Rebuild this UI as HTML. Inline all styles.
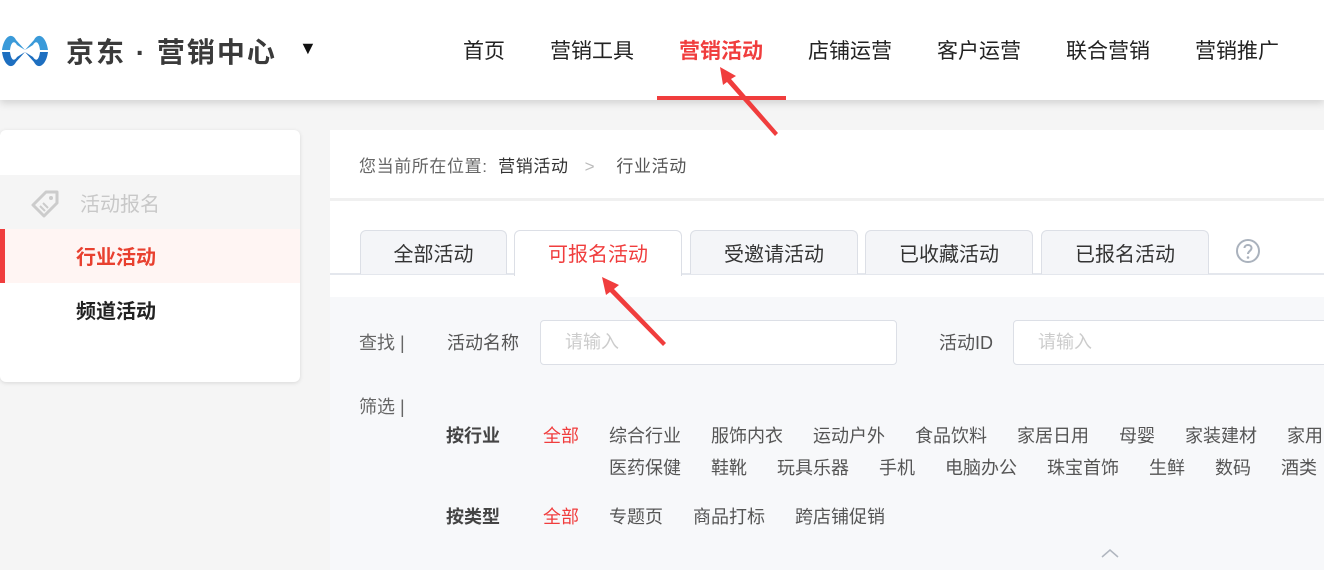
<!DOCTYPE html>
<html><head><meta charset="utf-8"><style>
*{margin:0;padding:0;box-sizing:border-box}
body{width:1324px;height:570px;overflow:hidden;background:#f5f5f5;font-family:"Liberation Sans","Noto Sans CJK SC",sans-serif;position:relative}
.a{position:absolute;white-space:nowrap}
.hdr{position:absolute;left:0;top:0;width:1324px;height:100px;background:#fff;box-shadow:0 3px 8px rgba(0,0,0,.15)}
.nav{font-size:21px;color:#222;top:35px}
.side{position:absolute;left:0;top:130px;width:300px;height:252px;background:#fff;border-radius:6px;box-shadow:0 1px 4px rgba(0,0,0,.12);overflow:hidden}
.main{position:absolute;left:330px;top:130px;width:994px;height:440px;background:#fff}
.tab{position:absolute;top:230px;height:44px;border:1px solid #dcdfe6;border-bottom:none;border-radius:6px 6px 0 0;background:#f4f5f8;font-size:20px;color:#333;text-align:center;line-height:48px}
.f{font-size:18px;color:#555}
.inp{position:absolute;height:45px;background:#fff;border:1.5px solid #dcdfe6;border-radius:4px;font-size:18px;color:#ccc;padding-left:24px;line-height:42px}
</style></head><body>
<div class="hdr"></div>
<svg class="a" style="left:0;top:28px" width="50" height="46" viewBox="0 0 50 46">
<path d="M2 22 C4 8 12 4 16 12 L25 22 L34 12 C38 4 46 8 48 22 L40 22 C39 14 36 12 33 17 L25 22 L17 17 C14 12 11 14 10 22Z" fill="#3a9ad9"/>
<path d="M2 24 C4 38 12 42 16 34 L25 24 L34 34 C38 42 46 38 48 24 L40 24 C39 32 36 34 33 29 L25 24 L17 29 C14 34 11 32 10 24Z" fill="#1e6fc0"/>
</svg>
<div class="a" style="left:66px;top:31px;font-size:28px;color:#3a3a3a;font-weight:bold;letter-spacing:2px">京东 · 营销中心</div>
<div class="a" style="left:299px;top:38px;font-size:18px;color:#111">▼</div>
<div class="a nav" style="left:463px">首页</div>
<div class="a nav" style="left:550px">营销工具</div>
<div class="a nav" style="left:679px;color:#f03d3d;font-weight:bold">营销活动</div>
<div class="a" style="left:657px;top:96px;width:129px;height:4px;background:#f03d3d"></div>
<div class="a nav" style="left:808px">店铺运营</div>
<div class="a nav" style="left:937px">客户运营</div>
<div class="a nav" style="left:1066px">联合营销</div>
<div class="a nav" style="left:1195px">营销推广</div>

<div class="side">
<div class="a" style="left:0;top:45px;width:300px;height:54px;background:#f5f5f5"></div>
<svg class="a" style="left:30px;top:58px" width="32" height="30" viewBox="0 0 32 30"><path d="M3 17 L16 4 L27 4 L27 15 L14 28Z" fill="none" stroke="#ccc" stroke-width="3" stroke-linejoin="round"/><circle cx="21" cy="10" r="2" fill="#ccc"/><path d="M10 18 L15 23 M13 15 L18 20" stroke="#ccc" stroke-width="2"/></svg>
<div class="a" style="left:80px;top:58px;font-size:20px;color:#c8c8c8">活动报名</div>
<div class="a" style="left:0;top:99px;width:300px;height:54px;background:#fff5f3"></div>
<div class="a" style="left:0;top:99px;width:5px;height:54px;background:#f03d3d"></div>
<div class="a" style="left:76px;top:111px;font-size:20px;color:#e8402f;font-weight:bold">行业活动</div>
<div class="a" style="left:76px;top:165px;font-size:20px;color:#222;font-weight:bold">频道活动</div>
</div>

<div class="main">
<div class="a" style="left:0;top:68px;width:994px;height:3px;background:#f0f0f0"></div>
<div class="a" style="left:29px;top:22px;font-size:17px;color:#666;letter-spacing:0.6px">您当前所在位置:&nbsp; <span style="color:#333">营销活动</span> &nbsp;&nbsp;<span style="color:#bbb">&gt;</span>&nbsp;&nbsp;&nbsp; <span style="color:#555">行业活动</span></div>
<div class="a" style="left:0;top:143px;width:994px;height:2px;background:#e4e7ed"></div>
<div class="a" style="left:0;top:167px;width:994px;height:273px;background:#f7f8fa"></div>
</div>
<div class="tab" style="left:360px;width:147px">全部活动</div>
<div class="tab" style="left:514px;width:168px;background:#fff;height:46px;color:#f03d3d">可报名活动</div>
<div class="tab" style="left:690px;width:168px">受邀请活动</div>
<div class="tab" style="left:865px;width:168px">已收藏活动</div>
<div class="tab" style="left:1041px;width:168px">已报名活动</div>
<svg class="a" style="left:1235px;top:238px" width="26" height="26" viewBox="0 0 26 26"><circle cx="13" cy="13" r="11" fill="none" stroke="#aab2bd" stroke-width="2"/><path d="M9.5 10 C9.5 6 16.5 6 16.5 10 C16.5 13 13 13 13 16" fill="none" stroke="#aab2bd" stroke-width="2"/><circle cx="13" cy="19.5" r="1.3" fill="#aab2bd"/></svg>

<div class="a f" style="left:359px;top:329px;color:#666">查找 |</div>
<div class="a f" style="left:447px;top:329px">活动名称</div>
<div class="inp" style="left:540px;top:320px;width:357px">请输入</div>
<div class="a f" style="left:939px;top:329px">活动ID</div>
<div class="inp" style="left:1013px;top:320px;width:330px">请输入</div>

<div class="a f" style="left:359px;top:393px;color:#666">筛选 |</div>
<div class="a f" style="left:446px;top:422px;font-weight:bold;color:#444">按行业</div>
<div class="a f" style="left:543px;top:422px;color:#f03d3d">全部</div>
<div class="a f" style="left:609px;top:422px">综合行业</div>
<div class="a f" style="left:711px;top:422px">服饰内衣</div>
<div class="a f" style="left:813px;top:422px">运动户外</div>
<div class="a f" style="left:915px;top:422px">食品饮料</div>
<div class="a f" style="left:1017px;top:422px">家居日用</div>
<div class="a f" style="left:1119px;top:422px">母婴</div>
<div class="a f" style="left:1185px;top:422px">家装建材</div>
<div class="a f" style="left:1287px;top:422px">家用</div>
<div class="a f" style="left:609px;top:454px">医药保健</div>
<div class="a f" style="left:711px;top:454px">鞋靴</div>
<div class="a f" style="left:777px;top:454px">玩具乐器</div>
<div class="a f" style="left:879px;top:454px">手机</div>
<div class="a f" style="left:945px;top:454px">电脑办公</div>
<div class="a f" style="left:1047px;top:454px">珠宝首饰</div>
<div class="a f" style="left:1149px;top:454px">生鲜</div>
<div class="a f" style="left:1215px;top:454px">数码</div>
<div class="a f" style="left:1281px;top:454px">酒类</div>
<div class="a f" style="left:446px;top:503px;font-weight:bold;color:#444">按类型</div>
<div class="a f" style="left:543px;top:503px;color:#f03d3d">全部</div>
<div class="a f" style="left:609px;top:503px">专题页</div>
<div class="a f" style="left:693px;top:503px">商品打标</div>
<div class="a f" style="left:795px;top:503px">跨店铺促销</div>
<svg class="a" style="left:1100px;top:547px" width="20" height="12" viewBox="0 0 20 12"><path d="M2 10 L10 3 L18 10" fill="none" stroke="#b0b6bf" stroke-width="1.5"/></svg>

<svg class="a" style="left:0;top:0" width="1324" height="570" viewBox="0 0 1324 570">
<g fill="#f03d3d">
<path d="M720 67 L736 76 L731 79 L778 133 L775 136 L727 82 L723 85Z"/>
<path d="M602 277 L619 285 L614 289 L666 343 L663 346 L610 292 L606 295Z"/>
</g>
</svg>
</body></html>
